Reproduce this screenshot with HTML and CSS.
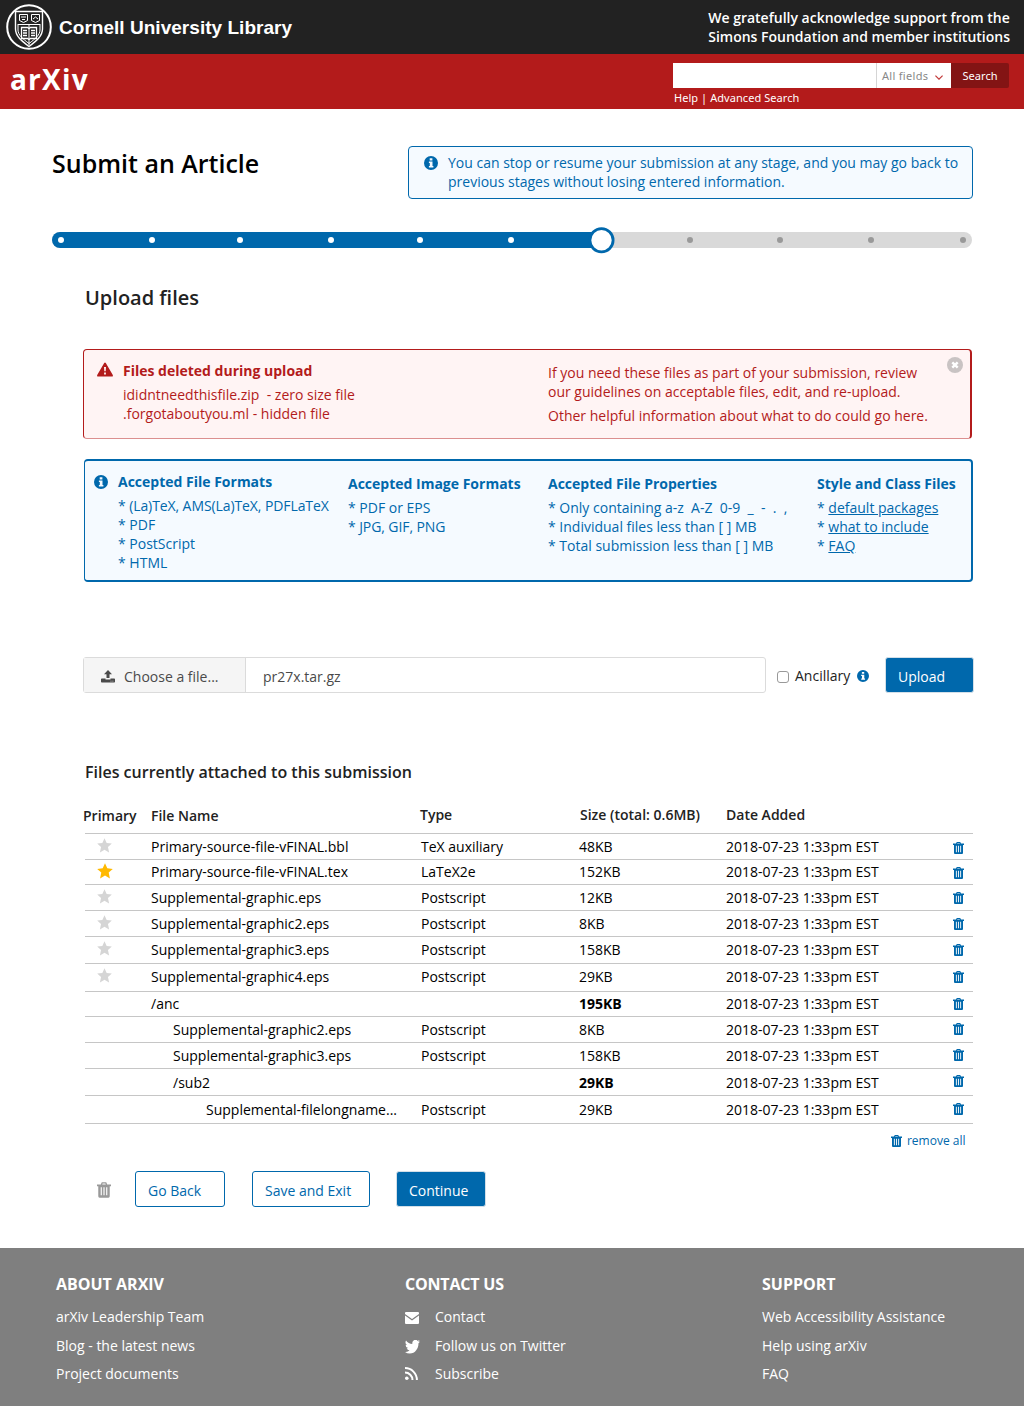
FILE: index.html
```html
<!DOCTYPE html>
<html lang="en">
<head>
<meta charset="utf-8">
<title>Submit an Article - arXiv</title>
<link rel="stylesheet" href="styles.css">
</head>
<body>
<svg class="defs" width="0" height="0" aria-hidden="true">
  <symbol id="trash" viewBox="0 0 11 12"><path fill-rule="evenodd" d="M3 1.6 3.6.2Q3.8 0 4 0h3q.2 0 .4.2L8 1.6h3V3h-1v8q0 1-1 1H2q-1 0-1-1V3H0V1.600zM4.100 1.600h2.800L6.600.9H4.400zM2.900 3.800v6.400h.9V3.800zM5.050 3.800v6.400h.9V3.800zM7.200 3.800v6.400h.9V3.800z"/></symbol>
  <symbol id="info" viewBox="0 0 14 14"><path fill-rule="evenodd" d="M7 0a7 7 0 1 1 0 14A7 7 0 0 1 7 0zM5.700 2.200v2.200h2.700V2.200zM4.900 5.400v1.500h.9v3.100h-.9v1.500h4.500V10h-.9V5.400z"/></symbol>
  <symbol id="star" viewBox="0 0 16 16"><path d="M8 .3l2.300 5 5.500.6-4.100 3.700 1.200 5.900L8 12.600l-4.900 2.900 1.200-5.900L.2 5.900l5.500-.6z"/></symbol>
</svg>

<header>
  <div class="top">
    <div class="brand">
      <svg class="seal" viewBox="0 0 46 46" fill="none" stroke="#fff">
        <circle cx="23" cy="23" r="21.800" stroke-width="2"/>
        <path stroke-width="1.400" d="M9.500 7.500h27v17.500c0 7-6 12-13.500 17.500C15.500 37 9.500 32 9.500 25z"/>
        <path d="M11.500 20.500h23M23 21v20M13.500 10.500h8v6l-4 2-4-2zM25.500 10.500h8v6l-4 2-4-2zM15 13h5M27 15l2.500-2 2.500 2M16 15.500h3M12 21v5c0 5 5 9 11 13.500C29 35 34 31 34 26v-5"/>
        <path stroke-width="1.300" d="M15.500 23.500h6l1.500 1 1.500-1h6v11h-6l-1.500 1-1.500-1h-6zM17 26.500h4M17 29h4M17 31.500h4M25 26.500h4M25 29h4M25 31.500h4"/>
      </svg>
      <span class="brand-name">Cornell University Library</span>
    </div>
    <p class="thanks">We gratefully acknowledge support from the<br>Simons Foundation and member institutions</p>
  </div>
  <div class="bar">
    <div class="logo">arXiv</div>
    <div class="search">
      <div class="search-row">
        <div class="search-input"></div>
        <div class="search-select">All fields
          <svg width="8" height="5" viewBox="0 0 8 5" fill="none" stroke="#c23a3a" stroke-width="1.200"><path d="M.4.600 4 4.200 7.600.6"/></svg>
        </div>
        <div class="search-button">Search</div>
      </div>
      <div class="search-links">Help | Advanced Search</div>
    </div>
  </div>
</header>

<main>
  <div class="title-row">
    <h1>Submit an Article</h1>
    <div class="notice">
      <svg class="i14"><use href="#info"/></svg>
      <p>You can stop or resume your submission at any stage, and you may go back to previous stages without losing entered information.</p>
    </div>
  </div>

  <div class="progress">
    <svg width="920" height="28" viewBox="0 0 920 28">
      <rect y="6" width="920" height="16" rx="8" fill="#d9d9d9"/>
      <path fill="#0068ac" d="M8 6h542v16H8A8 8 0 0 1 8 6z"/>
      <g fill="#fff"><circle cx="9" cy="14" r="3"/><circle cx="100" cy="14" r="3"/><circle cx="188" cy="14" r="3"/><circle cx="279" cy="14" r="3"/><circle cx="368" cy="14" r="3"/><circle cx="459" cy="14" r="3"/></g>
      <g fill="#999"><circle cx="638" cy="14" r="3"/><circle cx="728" cy="14" r="3"/><circle cx="819" cy="14" r="3"/><circle cx="911" cy="14" r="3"/></g>
      <circle cx="549.500" cy="14.300" r="11.600" fill="#fff" stroke="#0068ac" stroke-width="2.800"/>
    </svg>
  </div>

  <section class="content">
    <h2>Upload files</h2>

    <div class="alert">
      <svg class="warn" viewBox="0 0 16 14"><path fill="#b31b1b" fill-rule="evenodd" d="M7.200.5Q8-.5 8.800.5l7 12Q16.200 14 15 14H1Q-.2 14 .2 12.500zM7 4.500l.3 4.200h1.400L9 4.500zM7.100 10v2h1.800v-2z"/></svg>
      <div class="alert-files">
        <h4>Files deleted during upload</h4>
        <p>ididntneedthisfile.zip&nbsp; - zero size file<br>.forgotaboutyou.ml - hidden file</p>
      </div>
      <div class="alert-help">
        <p>If you need these files as part of your submission, review<br>our guidelines on acceptable files, edit, and re-upload.</p>
        <p>Other helpful information about what to do could go here.</p>
      </div>
      <svg class="close" viewBox="0 0 16 16"><circle cx="8" cy="8" r="8" fill="#c9c3c3"/><path d="M5.300 5.300l5.400 5.400M10.700 5.300l-5.400 5.400" stroke="#fff" stroke-width="2.400"/></svg>
    </div>

    <div class="formats">
      <svg class="i14"><use href="#info"/></svg>
      <div class="col first"><h4>Accepted File Formats</h4><p><span class="tight">* (La)TeX, AMS(La)TeX, PDFLaTeX</span><br>* PDF<br>* PostScript<br>* HTML</p></div>
      <div class="col"><h4>Accepted Image Formats</h4><p>* PDF or EPS<br><span class="tight">* JPG, GIF, PNG</span></p></div>
      <div class="col"><h4>Accepted File Properties</h4><p>* Only containing a-z&nbsp; A-Z&nbsp; 0-9&nbsp; _&nbsp; -&nbsp; .&nbsp; ,<br>* Individual files less than [ ] MB<br>* Total submission less than [ ] MB</p></div>
      <div class="col"><h4>Style and Class Files</h4><p>* <a>default packages</a><br>* <a>what to include</a><br>* <a>FAQ</a></p></div>
    </div>

    <div class="upload">
      <div class="picker">
        <div class="choose">
          <svg width="14" height="13" viewBox="0 0 14 13" fill="#4a4a4a"><path fill-rule="evenodd" d="M7 0l4 4.200H8.500V8h-3V4.200H3zM.8 8.500h3.700v.9h5v-.9h3.700q.8 0 .8.800v2.400q0 .8-.8.800H.8q-.8 0-.8-.8V9.300q0-.8.8-.8zM9.600 10.700v.7h.8v-.7zM11.500 10.700v.7h.8v-.7z"/></svg>
          <span>Choose a file...</span>
        </div>
        <div class="filename">pr27x.tar.gz</div>
      </div>
      <span class="check"></span>
      <span class="ancillary">Ancillary</span>
      <svg class="i12"><use href="#info"/></svg>
      <div class="btn solid upload-btn">Upload</div>
    </div>

    <h3>Files currently attached to this submission</h3>

    <div class="files">
      <div class="row head"><span class="primary">Primary</span><span>File Name</span><span class="up type">Type</span><span class="up size">Size (total: 0.6MB)</span><span class="up">Date Added</span><span></span></div>
      <div class="row"><svg class="star"><use href="#star"/></svg><span>Primary-source-file-vFINAL.bbl</span><span>TeX auxiliary</span><span>48KB</span><span>2018-07-23 1:33pm EST</span><svg class="trash low"><use href="#trash"/></svg></div>
      <div class="row h25"><svg class="star on"><use href="#star"/></svg><span>Primary-source-file-vFINAL.tex</span><span>LaTeX2e</span><span>152KB</span><span>2018-07-23 1:33pm EST</span><svg class="trash low"><use href="#trash"/></svg></div>
      <div class="row"><svg class="star"><use href="#star"/></svg><span>Supplemental-graphic.eps</span><span>Postscript</span><span>12KB</span><span>2018-07-23 1:33pm EST</span><svg class="trash"><use href="#trash"/></svg></div>
      <div class="row"><svg class="star"><use href="#star"/></svg><span>Supplemental-graphic2.eps</span><span>Postscript</span><span>8KB</span><span>2018-07-23 1:33pm EST</span><svg class="trash"><use href="#trash"/></svg></div>
      <div class="row h27"><svg class="star"><use href="#star"/></svg><span>Supplemental-graphic3.eps</span><span>Postscript</span><span>158KB</span><span>2018-07-23 1:33pm EST</span><svg class="trash"><use href="#trash"/></svg></div>
      <div class="row h28"><svg class="star"><use href="#star"/></svg><span>Supplemental-graphic4.eps</span><span>Postscript</span><span>29KB</span><span>2018-07-23 1:33pm EST</span><svg class="trash"><use href="#trash"/></svg></div>
      <div class="row h25"><span></span><span>/anc</span><span></span><b>195KB</b><span>2018-07-23 1:33pm EST</span><svg class="trash"><use href="#trash"/></svg></div>
      <div class="row"><span></span><span class="in1">Supplemental-graphic2.eps</span><span>Postscript</span><span>8KB</span><span>2018-07-23 1:33pm EST</span><svg class="trash high"><use href="#trash"/></svg></div>
      <div class="row"><span></span><span class="in1">Supplemental-graphic3.eps</span><span>Postscript</span><span>158KB</span><span>2018-07-23 1:33pm EST</span><svg class="trash high"><use href="#trash"/></svg></div>
      <div class="row h27 drop"><span></span><span class="in1">/sub2</span><span></span><b>29KB</b><span>2018-07-23 1:33pm EST</span><svg class="trash higher"><use href="#trash"/></svg></div>
      <div class="row h28 drop"><span></span><span class="in2">Supplemental-filelongname...</span><span>Postscript</span><span>29KB</span><span>2018-07-23 1:33pm EST</span><svg class="trash high"><use href="#trash"/></svg></div>
    </div>
    <div class="remove"><svg class="trash"><use href="#trash"/></svg>remove all</div>

    <div class="actions">
      <svg class="trash big"><use href="#trash"/></svg>
      <div class="btn back">Go Back</div>
      <div class="btn save">Save and Exit</div>
      <div class="btn solid next">Continue</div>
    </div>
  </section>
</main>

<footer>
  <div>
    <h5>ABOUT ARXIV</h5>
    <ul><li>arXiv Leadership Team</li><li>Blog - the latest news</li><li>Project documents</li></ul>
  </div>
  <div>
    <h5 class="contact">CONTACT US</h5>
    <ul>
      <li><svg class="mail" width="14" height="12" viewBox="0 0 14 12" fill="#fff"><path d="M1 0h12q1 0 1 1v1L7 7 0 2V1q0-1 1-1zM0 3.600l7 4.800 7-4.800V11q0 1-1 1H1q-1 0-1-1z"/></svg>Contact</li>
      <li><svg class="bird" width="15" height="14" viewBox="0 2.500 24 20" preserveAspectRatio="none" fill="#fff"><path d="M23.950 4.570a10 10 0 0 1-2.820.77 4.960 4.960 0 0 0 2.160-2.720c-.95.550-2 .95-3.130 1.180a4.920 4.920 0 0 0-8.380 4.480C7.690 8.100 4.070 6.130 1.640 3.160a4.920 4.920 0 0 0 1.520 6.570 4.900 4.900 0 0 1-2.230-.61v.06a4.920 4.920 0 0 0 3.950 4.830 5 5 0 0 1-2.210.08 4.940 4.940 0 0 0 4.600 3.420A9.870 9.870 0 0 1 0 19.540a14 14 0 0 0 7.550 2.210c9.050 0 14-7.500 14-13.980 0-.21 0-.42-.02-.63a9.940 9.940 0 0 0 2.420-2.570z"/></svg>Follow us on Twitter</li>
      <li><svg class="rss" width="12" height="13" viewBox="0 0 13 13" fill="none" stroke="#fff" stroke-width="2"><circle cx="1.800" cy="11.200" r="1.800" fill="#fff" stroke="none"/><path d="M0 5.500A7.500 7.500 0 0 1 7.500 13M0 1.100A11.900 11.900 0 0 1 11.900 13"/></svg>Subscribe</li>
    </ul>
  </div>
  <div>
    <h5>SUPPORT</h5>
    <ul><li>Web Accessibility Assistance</li><li>Help using arXiv</li><li>FAQ</li></ul>
  </div>
</footer>
</body>
</html>
```
FILE: styles.css
```css
* { box-sizing: border-box; }
body { margin: 0; background: #fff; color: #111; font: 14px/19px "Open Sans", "Noto Sans", sans-serif; }
h1, h2, h3, h4, h5, p, ul { margin: 0; padding: 0; }
svg { display: block; flex: none; }
.defs { position: absolute; }

.top { height: 54px; background: #222; color: #fff; display: flex; justify-content: space-between; padding: 0 14px 0 6px; }
.brand { display: flex; align-items: center; gap: 7px; }
.seal { width: 46px; height: 46px; }
.brand-name { font: bold 19px/24px "Liberation Sans", Arial, sans-serif; letter-spacing: .03px; padding-top: 2px; white-space: nowrap; }
.thanks { padding-top: 8px; font-weight: 600; white-space: nowrap; }

.bar { height: 55px; background: #b31b1b; color: #fff; display: flex; justify-content: space-between; padding: 0 15px 0 10px; }
.logo { font: bold 28px/34px "Open Sans", sans-serif; letter-spacing: 1.200px; padding-top: 8px; }
.search { width: 336px; padding-top: 9px; font: 11px/15px "Noto Sans", sans-serif; letter-spacing: .06px; }
.search-row { display: flex; height: 25px; line-height: 25px; }
.search-input { width: 204px; background: #fff; border-right: 1px solid #d5d5d5; }
.search-select { width: 74px; background: #fff; color: #888; display: flex; align-items: center; justify-content: space-between; padding: 0 8px 0 5px; letter-spacing: .3px; }
.search-select svg { margin-top: 4px; }
.search-button { width: 58px; background: #831414; text-align: center; border-radius: 0 2px 2px 0; }
.search-links { padding: 2px 0 0 1px; }

main { padding: 37px 51px 41px 52px; height: 1139px; }
.title-row { display: flex; justify-content: space-between; }
h1 { font-size: 25px; line-height: 34px; font-weight: 600; color: #000; white-space: nowrap; }
.notice { width: 565px; height: 53px; border: 1px solid #0068ac; border-radius: 4px; background: #f5faff; color: #0068ac; display: flex; gap: 10px; padding: 6px 12px 0 15px; }
.notice .i14 { margin-top: 3px; }
.i14 { width: 14px; height: 14px; fill: #0068ac; }
.i12 { width: 12px; height: 12px; fill: #0068ac; }
.progress { padding-top: 27px; }

.content { padding-left: 31px; width: 921px; }
h2 { padding: 30px 0 0 2px; font-size: 20px; line-height: 28px; font-weight: 600; color: #222; }
h4 { font-size: 14px; line-height: 19px; font-weight: 700; white-space: nowrap; }
.alert { margin-top: 37px; width: 889px; height: 90px; border: 1px solid #b31b1b; border-right-width: 2px; border-bottom-color: #dc8f8f; border-radius: 4px; background: #fff4f4; color: #b31b1b; display: flex; white-space: nowrap; }
.warn { width: 16px; height: 15px; margin: 12px 0 0 13px; }
.alert-files { margin: 11px 0 0 10px; width: 425px; }
.alert-files p { margin-top: 5px; }
.alert-help { margin-top: 13px; width: 399px; }
.alert-help p + p { margin-top: 5px; }
.close { width: 16px; height: 16px; margin-top: 7px; }

.formats { margin: 20px 0 0 1px; width: 889px; height: 123px; border: 2px solid #0068ac; border-left-width: 1px; border-radius: 4px; background: #f5faff; color: #0068ac; display: grid; grid-template-columns: 24px 230px 200px 269px 1fr; padding: 13px 0 0 9px; white-space: nowrap; }
.formats .i14 { margin-top: 1px; }
.formats .first { margin-top: -2px; }
.formats p { margin-top: 5px; }
.formats a { text-decoration: underline; }
.tight { letter-spacing: -.09px; }

.upload { display: flex; margin-top: 75px; height: 36px; width: 891px; }
.picker { width: 683px; display: flex; border: 1px solid #dbdbdb; border-radius: 3px; color: #4a4a4a; line-height: 38px; }
.choose { width: 162px; background: #f5f5f5; border-right: 1px solid #dbdbdb; display: flex; gap: 9px; padding-left: 17px; }
.choose svg { margin-top: 12px; }
.filename { padding-left: 17px; }
.check { width: 12px; height: 12px; border: 1px solid #999; border-radius: 3px; margin: 14px 0 0 11px; }
.ancillary { margin: 9px 0 0 6px; width: 62px; color: #222; }
.upload .i12 { margin-top: 13px; }
.btn { height: 36px; line-height: 37px; border: 1px solid #0068ac; border-radius: 3px; color: #0068ac; padding-left: 12px; white-space: nowrap; }
.solid { background: #0068ac; color: #fff; border-color: #d3dfe8; }
.upload-btn { margin-left: 16px; width: 89px; }

h3 { margin: 67px 0 0 2px; font-size: 16px; line-height: 24px; font-weight: 600; color: #222; }
.files { margin-top: 16px; }
.row { display: grid; grid-template-columns: 66px 270px 158px 147px 226px 1fr; height: 26px; border-bottom: 1px solid #c6c6c6; margin-left: 2px; width: 888px; padding-top: 3px; color: #000; white-space: nowrap; }
.head { height: 34px; padding-top: 6px; color: #222; font-weight: 600; }
.primary { margin-left: -2px; }
.up { margin-top: -1px; }
.type { margin-left: -1px; }
.size { margin-left: 1px; }
.h25 { height: 25px; padding-top: 2px; }
.h27 { height: 27px; }
.h28 { height: 28px; }
.drop { padding-top: 4px; }
.in1 { padding-left: 22px; }
.in2 { padding-left: 55px; }
.star { width: 15px; height: 15px; margin: 1px 0 0 12px; fill: #d5d5d5; }
.star.on { width: 16px; height: 16px; fill: #ffb900; }
.trash { width: 11px; height: 12px; fill: #0068ac; margin: 4px 0 0 1px; }
.trash.low { margin-top: 5px; }
.trash.high { margin-top: 3px; }
.trash.higher { margin-top: 2px; }
.remove { display: flex; justify-content: flex-end; gap: 5px; width: 882.500px; padding-top: 7px; font-size: 12px; color: #0068ac; }

.actions { display: flex; margin-top: 21px; }
.trash.big { width: 14px; height: 16px; margin: 11px 24px 0 14px; fill: #999; }
.back { width: 90px; margin-right: 27px; }
.save { width: 118px; margin-right: 26px; }
.next { width: 90px; }

footer { height: 158px; background: #7f7f7f; color: #fff; display: grid; grid-template-columns: 349px 357px 1fr; padding: 25px 0 0 56px; white-space: nowrap; }
h5 { font-size: 16px; line-height: 23px; font-weight: 700; }
.contact { letter-spacing: -.2px; }
ul { list-style: none; padding-top: 6px; }
li { display: flex; align-items: center; height: 29px; }
li:last-child { height: 27px; }
li svg { width: 15px; margin-right: 15px; }
.mail { width: 14px; margin: 3px 16px 0 0; }
.bird { margin-top: 2px; }
.rss { width: 13px; margin: -1px 17px 0 0; }
```
